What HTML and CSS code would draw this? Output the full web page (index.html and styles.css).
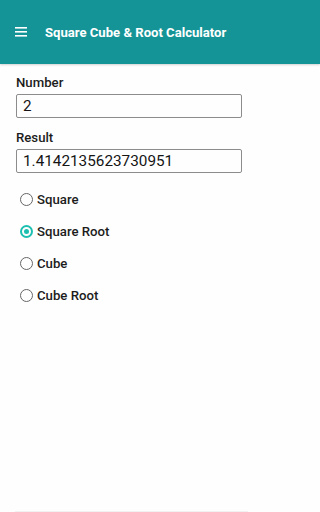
FILE: index.html
```html
<!DOCTYPE html>
<html>
<head>
<meta charset="utf-8">
<meta name="viewport" content="width=device-width, initial-scale=1">
<link rel="stylesheet" href="styles.css">
</head>
<body>
<header class="appbar">
  <svg class="menu" width="12" height="10" viewBox="0 0 12 10"><rect x="0" y="0" width="12" height="1.6" fill="#fff"/><rect x="0" y="4" width="12" height="1.6" fill="#fff"/><rect x="0" y="8" width="12" height="1.6" fill="#fff"/></svg>
  <div class="title">Square Cube &amp; Root Calculator</div>
</header>
<main class="content">
  <div class="label">Number</div>
  <div class="field">2</div>
  <div class="label label-second">Result</div>
  <div class="field">1.4142135623730951</div>
  <div class="radios">
    <div class="radio"><span class="dot"></span><span class="rtext">Square</span></div>
    <div class="radio checked"><span class="dot"></span><span class="rtext">Square Root</span></div>
    <div class="radio"><span class="dot"></span><span class="rtext">Cube</span></div>
    <div class="radio"><span class="dot"></span><span class="rtext">Cube Root</span></div>
  </div>
</main>
<div class="bottomline"></div>
</body>
</html>
```
FILE: styles.css
```css
html, body {
  margin: 0;
  padding: 0;
  background: #fefefe;
  font-family: Roboto, "Noto Sans", sans-serif;
  height: 100%;
  overflow: hidden;
}
body {
  position: relative;
}
.appbar {
  height: 64px;
  background: #159497;
  display: flex;
  align-items: center;
  padding-left: 15px;
  box-shadow: 0 1px 2px rgba(0,0,0,0.18);
  box-sizing: border-box;
}
.menu {
  display: block;
  margin-top: -1px;
}
.title {
  margin-left: 18px;
  color: #fff;
  font-size: 13.1px;
  font-weight: 700;
  margin-top: 1px;
}
.content {
  width: 258px;
  box-sizing: border-box;
  padding: 11px 16px 0 16px;
  display: flex;
  flex-direction: column;
}
.label {
  font-size: 13.2px;
  font-weight: 500;
  line-height: 16px;
  color: #1c1c1c;
}
.label-second {
  margin-top: 12px;
}
.field {
  margin-top: 3px;
  height: 24px;
  box-sizing: border-box;
  border: 1px solid #8c8c8c;
  border-radius: 2px;
  padding-left: 6px;
  font-size: 15.3px;
  line-height: 22px;
  color: #151515;
}
.radios {
  margin-top: 10px;
  display: flex;
  flex-direction: column;
}
.radio {
  height: 32px;
  display: flex;
  align-items: center;
}
.dot {
  width: 13px;
  height: 13px;
  flex: 0 0 13px;
  box-sizing: border-box;
  border: 1.3px solid #666;
  border-radius: 50%;
  margin-left: 4px;
  margin-right: 4px;
  display: flex;
  align-items: center;
  justify-content: center;
}
.checked .dot {
  border: 2px solid #1dbfb1;
}
.checked .dot::after {
  content: "";
  width: 5px;
  height: 5px;
  border-radius: 50%;
  background: #1dbfb1;
}
.rtext {
  font-size: 13.2px;
  font-weight: 500;
  color: #1c1c1c;
}
.bottomline {
  position: absolute;
  left: 15px;
  width: 233px;
  bottom: 0;
  height: 1px;
  background: #f1f1f1;
}
```
